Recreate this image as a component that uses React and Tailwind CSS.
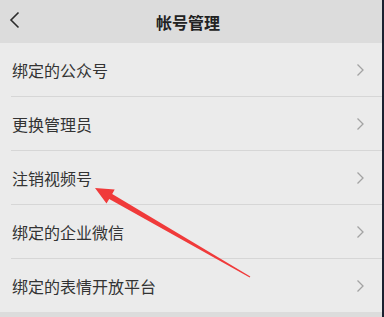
import React from 'react';

const items = ['绑定的公众号', '更换管理员', '注销视频号', '绑定的企业微信', '绑定的表情开放平台'];

const Chevron = () => (
  <svg width="9" height="14" viewBox="0 0 9 14" fill="none">
    <polyline points="1.5,1.5 7,7 1.5,12.5" stroke="#a3a3a3" strokeWidth="1.3" />
  </svg>
);

export default function App() {
  return (
    <div
      className="relative flex w-[384px] h-[317px] overflow-hidden bg-[#dcdcdc] text-[#333333]"
      style={{ fontFamily: '"Noto Sans CJK SC", "Noto Sans", sans-serif' }}
    >
      <div className="flex-1 flex flex-col">
        {/* header */}
        <div className="h-[43px] shrink-0 relative flex items-center justify-center bg-[#dcdcdc]">
          <svg className="absolute left-[9px] top-[11px]" width="12" height="18" viewBox="0 0 12 18" fill="none">
            <polyline points="9.5,1.5 2,9 9.5,16.5" stroke="#2b2b2b" strokeWidth="1.6" />
          </svg>
          <span className="text-[16px] font-bold text-[#222] pr-[6px]">帐号管理</span>
        </div>

        {/* list */}
        <div className="bg-[#ebebeb]">
          {items.map((label, i) => (
            <div key={label} className="pl-[11px]">
              <div
                className={`flex items-center justify-between pl-px pr-[17px] ${
                  i < items.length - 1 ? 'h-[54px] border-b border-[#d6d6d6]' : 'h-[53px]'
                }`}
              >
                <span className="text-[16px] leading-none">{label}</span>
                <Chevron />
              </div>
            </div>
          ))}
        </div>
      </div>
      <div className="w-[2px] shrink-0 bg-[#1b2030]" />

      {/* annotation arrow */}
      <svg className="absolute left-0 top-0 pointer-events-none" width="384" height="317">
        <polygon
          points="95,188 114.7,189.4 112.2,193.9 250.3,276.6 249.7,277.4 109.2,199.1 106.5,203.6"
          fill="#f03a3a"
        />
      </svg>
    </div>
  );
}
